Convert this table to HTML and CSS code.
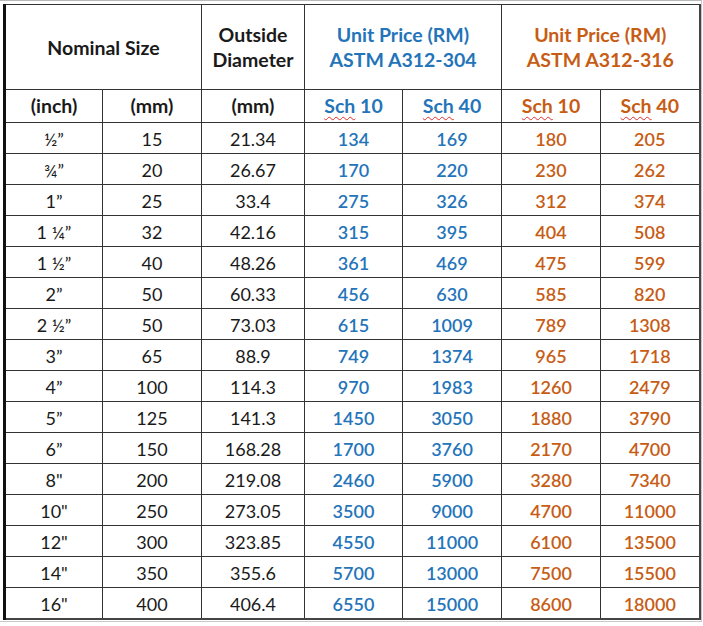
FILE: index.html
```html
<!DOCTYPE html>
<html>
<head>
<meta charset="utf-8">
<link rel="stylesheet" href="styles.css">
</head>
<body>
<div class="frame">
<table class="price">
<colgroup>
<col class="c1"><col class="c2"><col class="c3"><col class="c4"><col class="c5"><col class="c6"><col class="c7">
</colgroup>
<thead>
<tr class="h1">
<th colspan="2">Nominal Size</th>
<th>Outside<br>Diameter</th>
<th colspan="2" class="blue">Unit Price (RM)<br>ASTM A312-304</th>
<th colspan="2" class="orange">Unit Price (RM)<br>ASTM A312-316</th>
</tr>
<tr class="h2">
<th>(inch)</th><th>(mm)</th><th>(mm)</th>
<th class="blue"><span class="sq">Sch</span> 10</th>
<th class="blue"><span class="sq">Sch</span> 40</th>
<th class="orange"><span class="sq">Sch</span> 10</th>
<th class="orange"><span class="sq">Sch</span> 40</th>
</tr>
</thead>
<tbody>
<tr><td>½”</td><td>15</td><td>21.34</td><td class="blue">134</td><td class="blue">169</td><td class="orange">180</td><td class="orange">205</td></tr>
<tr><td>¾”</td><td>20</td><td>26.67</td><td class="blue">170</td><td class="blue">220</td><td class="orange">230</td><td class="orange">262</td></tr>
<tr><td>1”</td><td>25</td><td>33.4</td><td class="blue">275</td><td class="blue">326</td><td class="orange">312</td><td class="orange">374</td></tr>
<tr><td>1 ¼”</td><td>32</td><td>42.16</td><td class="blue">315</td><td class="blue">395</td><td class="orange">404</td><td class="orange">508</td></tr>
<tr><td>1 ½”</td><td>40</td><td>48.26</td><td class="blue">361</td><td class="blue">469</td><td class="orange">475</td><td class="orange">599</td></tr>
<tr><td>2”</td><td>50</td><td>60.33</td><td class="blue">456</td><td class="blue">630</td><td class="orange">585</td><td class="orange">820</td></tr>
<tr><td>2 ½”</td><td>50</td><td>73.03</td><td class="blue">615</td><td class="blue">1009</td><td class="orange">789</td><td class="orange">1308</td></tr>
<tr><td>3”</td><td>65</td><td>88.9</td><td class="blue">749</td><td class="blue">1374</td><td class="orange">965</td><td class="orange">1718</td></tr>
<tr><td>4”</td><td>100</td><td>114.3</td><td class="blue">970</td><td class="blue">1983</td><td class="orange">1260</td><td class="orange">2479</td></tr>
<tr><td>5”</td><td>125</td><td>141.3</td><td class="blue">1450</td><td class="blue">3050</td><td class="orange">1880</td><td class="orange">3790</td></tr>
<tr><td>6”</td><td>150</td><td>168.28</td><td class="blue">1700</td><td class="blue">3760</td><td class="orange">2170</td><td class="orange">4700</td></tr>
<tr><td>8"</td><td>200</td><td>219.08</td><td class="blue">2460</td><td class="blue">5900</td><td class="orange">3280</td><td class="orange">7340</td></tr>
<tr><td>10"</td><td>250</td><td>273.05</td><td class="blue">3500</td><td class="blue">9000</td><td class="orange">4700</td><td class="orange">11000</td></tr>
<tr><td>12"</td><td>300</td><td>323.85</td><td class="blue">4550</td><td class="blue">11000</td><td class="orange">6100</td><td class="orange">13500</td></tr>
<tr><td>14"</td><td>350</td><td>355.6</td><td class="blue">5700</td><td class="blue">13000</td><td class="orange">7500</td><td class="orange">15500</td></tr>
<tr><td>16"</td><td>400</td><td>406.4</td><td class="blue">6550</td><td class="blue">15000</td><td class="orange">8600</td><td class="orange">18000</td></tr>
</tbody>
</table>
</div>
</body>
</html>
```
FILE: styles.css
```css
html, body {
  margin: 0;
  padding: 0;
  background: #ffffff;
}
.frame {
  width: 702px;
  height: 622px;
  border-top: 1px solid #b8b8b8;
  border-right: 1px solid #c8c8c8;
  border-bottom: 1px solid #c8c8c8;
  box-sizing: border-box;
  padding: 3px 0 0 3px;
}
.price {
  border-collapse: collapse;
  table-layout: fixed;
  width: 695px;
  font-family: Lato, "Open Sans", sans-serif;
  font-size: 18px;
  color: #1a1a1a;
  border-left: 3px solid #111;
  border-top: 1px solid #555;
  border-right: 2px solid #444;
  border-bottom: 2px solid #444;
}
.c1 { width: 98px; }
.c2 { width: 99px; }
.c3 { width: 103px; }
.c4 { width: 98px; }
.c5 { width: 99px; }
.c6 { width: 99px; }
.c7 { width: 99px; }
.price th, .price td {
  border: 1px solid #333;
  text-align: center;
  padding: 0;
  line-height: 24px;
}
.price th {
  font-weight: 700;
  font-size: 19.5px;
}
.h1 th {
  height: 84px;
  line-height: 25px;
}
.h2 th {
  height: 32px;
}
.price td {
  height: 29px;
  padding-top: 1px;
}
.blue { color: #2474ba; }
.orange { color: #c75c14; }
.price td.blue, .price td.orange {
  font-weight: 600;
}
.sq {
  text-decoration: underline wavy #e03030;
  text-decoration-thickness: 1px;
  text-underline-offset: 3px;
}
```
